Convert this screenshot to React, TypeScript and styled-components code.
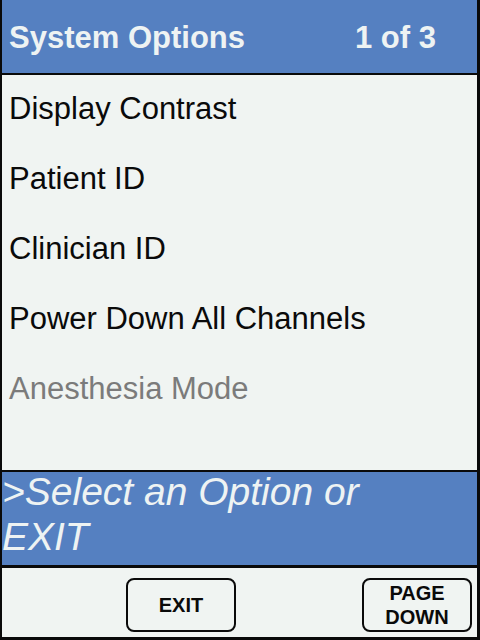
import React from "react";
import styled, { createGlobalStyle } from "styled-components";

const GlobalStyle = createGlobalStyle`
  html, body {
    margin: 0;
    padding: 0;
    background: #f0f4f2;
  }
  body {
    font-family: "Liberation Sans", Arial, sans-serif;
  }
`;

const Screen = styled.div`
  width: 480px;
  height: 640px;
  box-sizing: border-box;
  display: flex;
  flex-direction: column;
  background: #f0f4f2;
  border-left: 2px solid #0a0a0a;
  border-right: 3px solid #0a0a0a;
  border-bottom: 3px solid #0a0a0a;
  overflow: hidden;
`;

const Header = styled.header`
  height: 75px;
  flex: none;
  display: flex;
  align-items: center;
  padding: 3px 0 0 7px;
  box-sizing: border-box;
  background: #5580c1;
  border-bottom: 2px solid #0a0a0a;
  color: #eef3f3;
  font-size: 31px;
  font-weight: bold;
`;

const Title = styled.span`
  width: 346px;
`;

const PageCount = styled.span``;

const Menu = styled.ul`
  flex: 1;
  list-style: none;
  margin: 0;
  padding: 0;
`;

const Item = styled.li<{ $disabled?: boolean }>`
  height: 70px;
  box-sizing: border-box;
  padding: 0 0 3px 7px;
  display: flex;
  align-items: center;
  font-size: 31px;
  color: ${(p) => (p.$disabled ? "#7b7b7b" : "#0a0a0a")};
`;

const Prompt = styled.div`
  height: 98px;
  flex: none;
  box-sizing: border-box;
  background: #5580c1;
  border-top: 2px solid #0a0a0a;
  border-bottom: 3px solid #0a0a0a;
  overflow: hidden;
`;

const PromptText = styled.p`
  margin: -3px 0 0 0;
  font-size: 39px;
  font-style: italic;
  line-height: 45px;
  color: #eef3f3;
`;

const Footer = styled.footer`
  height: 69px;
  flex: none;
  box-sizing: border-box;
  display: flex;
  align-items: flex-start;
  padding: 10px 0 0 124px;
  gap: 126px;
`;

const SoftKey = styled.button`
  width: 110px;
  height: 54px;
  box-sizing: border-box;
  border: 2px solid #0a0a0a;
  border-radius: 8px;
  background: #f0f4f2;
  color: #0a0a0a;
  font-family: "Liberation Sans", Arial, sans-serif;
  font-size: 20px;
  font-weight: bold;
  line-height: 24px;
  padding: 0;
  display: flex;
  align-items: center;
  justify-content: center;
  text-align: center;
`;

const items: { label: string; disabled?: boolean }[] = [
  { label: "Display Contrast" },
  { label: "Patient ID" },
  { label: "Clinician ID" },
  { label: "Power Down All Channels" },
  { label: "Anesthesia Mode", disabled: true },
];

export default function App() {
  return (
    <>
      <GlobalStyle />
      <Screen>
        <Header>
          <Title>System Options</Title>
          <PageCount>1 of 3</PageCount>
        </Header>
        <Menu>
          {items.map((it) => (
            <Item key={it.label} $disabled={it.disabled}>
              {it.label}
            </Item>
          ))}
        </Menu>
        <Prompt>
          <PromptText>
            &gt;Select an Option or
            <br />
            EXIT
          </PromptText>
        </Prompt>
        <Footer>
          <SoftKey>EXIT</SoftKey>
          <SoftKey>
            PAGE
            <br />
            DOWN
          </SoftKey>
        </Footer>
      </Screen>
    </>
  );
}
